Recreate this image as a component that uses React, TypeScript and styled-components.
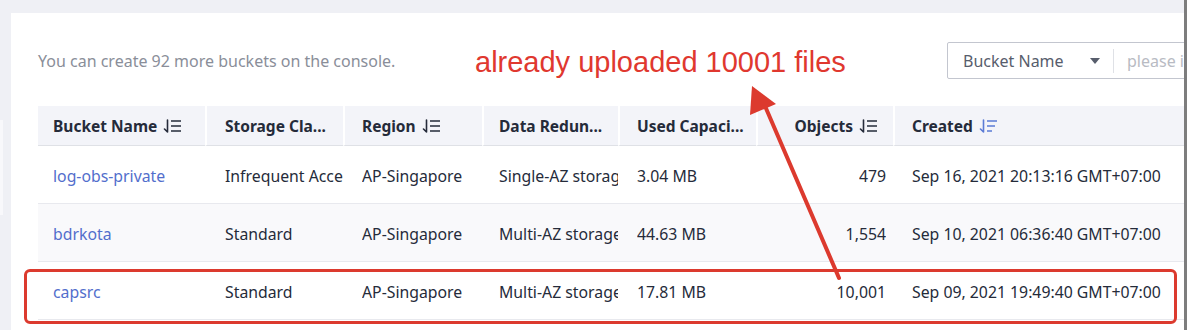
import React from "react";
import styled, { createGlobalStyle } from "styled-components";

const GlobalStyle = createGlobalStyle`
  html, body { margin: 0; padding: 0; }
  body {
    width: 1187px;
    height: 330px;
    overflow: hidden;
    background: #eff0f5;
    font-family: "Noto Sans", "Open Sans", sans-serif;
    font-size: 15.8px;
    color: #252b3a;
  }
`;

const Page = styled.div`
  position: relative;
  display: flex;
  width: 1187px;
  height: 330px;
  overflow: hidden;
`;

const Main = styled.div`
  flex: 1;
  display: flex;
  padding-top: 13px;
  background: #eff0f5;
  min-width: 0;
`;

const LeftRail = styled.div`
  width: 11px;
  flex: none;
  display: flex;
  flex-direction: column;
`;

const RailTab = styled.div`
  margin-top: 107px;
  width: 3px;
  height: 95px;
  background: #f8f8fb;
`;

const ScrollEdge = styled.div`
  width: 3px;
  flex: none;
  background: #7d7d7d;
`;

const Card = styled.div`
  flex: 1;
  min-width: 0;
  background: #ffffff;
  overflow: hidden;
  padding: 29px 0 0 27px;
`;

const Toolbar = styled.div`
  display: flex;
  align-items: center;
  height: 37px;
`;

const Quota = styled.div`
  color: #8a8e99;
  font-size: 16px;
  white-space: nowrap;
`;

const Spacer = styled.div`
  flex: 1;
`;

const SearchBox = styled.div`
  flex: none;
  display: flex;
  align-items: center;
  width: 300px;
  height: 37px;
  box-sizing: border-box;
  border: 1px solid #c3c6cf;
  border-radius: 2px;
  margin-right: -63px;
  overflow: hidden;
`;

const SelectPart = styled.div`
  flex: none;
  display: flex;
  align-items: center;
  width: 165px;
  box-sizing: border-box;
  padding: 0 13px 0 15px;
  color: #575d6c;
  font-size: 16px;
  white-space: nowrap;
`;

const SelectLabel = styled.span`
  flex: 1;
`;

const Divider = styled.div`
  flex: none;
  width: 1px;
  height: 24px;
  background: #dfe1e6;
`;

const Placeholder = styled.span`
  padding-left: 13px;
  color: #b8bbc3;
  font-size: 16px;
  white-space: nowrap;
  overflow: hidden;
`;

const Table = styled.div`
  margin-top: 27px;
  display: grid;
  grid-template-columns: 167px 138px 139px 136px 138px 137px 291px;
`;

const HeadCell = styled.div<{ $pl: number; $right?: boolean; $first?: boolean }>`
  height: 40px;
  display: flex;
  align-items: center;
  justify-content: ${(p) => (p.$right ? "flex-end" : "flex-start")};
  gap: 5px;
  padding-left: ${(p) => p.$pl}px;
  padding-right: ${(p) => (p.$right ? 15 : 0)}px;
  background: #f3f4f9;
  border-bottom: 1px solid #dfe1e6;
  border-left: ${(p) => (p.$first ? "none" : "2px solid #ffffff")};
  box-sizing: border-box;
  font-size: 15.5px;
  font-weight: 700;
  white-space: nowrap;
  overflow: hidden;
`;

const DataCell = styled.div<{ $pl: number; $right?: boolean; $alt?: boolean }>`
  height: 58px;
  display: flex;
  align-items: center;
  justify-content: ${(p) => (p.$right ? "flex-end" : "flex-start")};
  padding-left: ${(p) => p.$pl}px;
  padding-right: ${(p) => (p.$right ? 11 : 0)}px;
  padding-top: 2px;
  box-sizing: border-box;
  background: ${(p) => (p.$alt ? "#f9f9fb" : "#ffffff")};
  border-bottom: 1px solid #e8e9ee;
  min-width: 0;
`;

const Clip = styled.span`
  display: block;
  overflow: hidden;
  white-space: nowrap;
  text-overflow: clip;
  margin-right: -4px;
`;

const Link = styled.span`
  color: #526ecc;
  white-space: nowrap;
`;

const Annotation = styled.div`
  position: absolute;
  left: 475px;
  top: 44px;
  font-family: "Liberation Sans", Arial, sans-serif;
  font-size: 29px;
  color: #e0382f;
  white-space: nowrap;
  line-height: 36px;
`;

const Highlight = styled.div`
  position: absolute;
  left: 24px;
  top: 269px;
  width: 1153px;
  height: 55px;
  box-sizing: border-box;
  border: 3px solid #dc3a2e;
  border-radius: 6px;
`;

const ArrowLayer = styled.svg`
  position: absolute;
  left: 0;
  top: 0;
  pointer-events: none;
`;

const SortIcon = ({ active }: { active?: boolean }) => {
  const c = active ? "#5b7bd5" : "#252b3a";
  return (
    <svg width="20" height="14" viewBox="0 0 20 14" fill="none">
      <path d="M5.5 1v12M5.5 13L2.5 10" stroke={c} strokeWidth="1.6" strokeLinecap="round" />
      {active ? (
        <path d="M9 2h10M9 7h8M9 12h5" stroke={c} strokeWidth="1.6" />
      ) : (
        <path d="M9 2h10M9 7h10M9 12h10" stroke={c} strokeWidth="1.6" />
      )}
    </svg>
  );
};

const Caret = () => (
  <svg width="10" height="6" viewBox="0 0 10 6">
    <path d="M0 0h10L5 6z" fill="#575d6c" />
  </svg>
);

type Col = { title: string; pl: number; dpl: number; sort?: "on" | "active"; right?: boolean };

const columns: Col[] = [
  { title: "Bucket Name", pl: 15, dpl: 15, sort: "on" },
  { title: "Storage Cla...", pl: 18, dpl: 20 },
  { title: "Region", pl: 17, dpl: 19, sort: "on" },
  { title: "Data Redun...", pl: 15, dpl: 17 },
  { title: "Used Capaci...", pl: 17, dpl: 19 },
  { title: "Objects", pl: 0, dpl: 0, sort: "on", right: true },
  { title: "Created", pl: 17, dpl: 19, sort: "active" },
];

const rows = [
  ["log-obs-private", "Infrequent Access", "AP-Singapore", "Single-AZ storage", "3.04 MB", "479", "Sep 16, 2021 20:13:16 GMT+07:00"],
  ["bdrkota", "Standard", "AP-Singapore", "Multi-AZ storage", "44.63 MB", "1,554", "Sep 10, 2021 06:36:40 GMT+07:00"],
  ["capsrc", "Standard", "AP-Singapore", "Multi-AZ storage", "17.81 MB", "10,001", "Sep 09, 2021 19:49:40 GMT+07:00"],
];

export default function App() {
  return (
    <>
      <GlobalStyle />
      <Page>
        <Main>
          <LeftRail>
            <RailTab />
          </LeftRail>
          <Card>
            <Toolbar>
              <Quota>You can create 92 more buckets on the console.</Quota>
              <Spacer />
              <SearchBox>
                <SelectPart>
                  <SelectLabel>Bucket Name</SelectLabel>
                  <Caret />
                </SelectPart>
                <Divider />
                <Placeholder>please input bucket name</Placeholder>
              </SearchBox>
            </Toolbar>
            <Table>
              {columns.map((c, i) => (
                <HeadCell key={c.title} $pl={c.pl} $right={c.right} $first={i === 0}>
                  {c.title}
                  {c.sort && <SortIcon active={c.sort === "active"} />}
                </HeadCell>
              ))}
              {rows.map((r, ri) =>
                r.map((v, ci) => (
                  <DataCell
                    key={`${ri}-${ci}`}
                    $pl={columns[ci].dpl}
                    $right={columns[ci].right}
                    $alt={ri === 1}
                  >
                    {ci === 0 ? <Link>{v}</Link> : <Clip>{v}</Clip>}
                  </DataCell>
                ))
              )}
            </Table>
          </Card>
        </Main>
        <ScrollEdge />
        <Annotation>already uploaded 10001 files</Annotation>
        <Highlight />
        <ArrowLayer width="1187" height="330" viewBox="0 0 1187 330">
          <line x1="839" y1="278" x2="765" y2="106" stroke="#dc3a2e" strokeWidth="4" strokeLinecap="round" />
          <polygon points="752,86 750,115 776,104" fill="#dc3a2e" />
        </ArrowLayer>
      </Page>
    </>
  );
}
